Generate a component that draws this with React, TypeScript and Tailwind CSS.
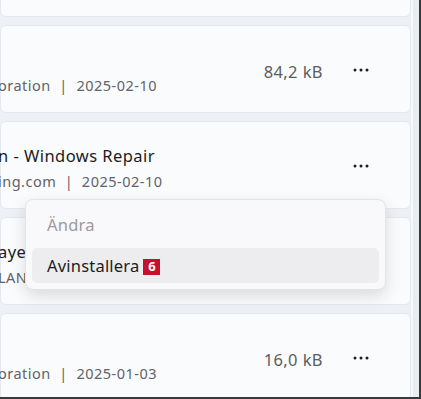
import React from "react";

interface RowProps {
  title?: string;
  subtitle: string;
  size?: string;
}

function Dots() {
  return (
    <svg width="16" height="4" viewBox="0 0 16 4" className="text-[#1f1f1f]">
      <circle cx="2" cy="2" r="1.5" fill="currentColor" />
      <circle cx="8" cy="2" r="1.5" fill="currentColor" />
      <circle cx="14" cy="2" r="1.5" fill="currentColor" />
    </svg>
  );
}

function AppRow({ title, subtitle, size }: RowProps) {
  return (
    <div className="h-[88px] shrink-0 flex items-center rounded-md bg-[#fafbfd] border border-[#e4e9ef] pr-[41px]">
      <div className="flex-1 flex flex-col gap-[5px] pt-[6px] -ml-[3px] overflow-hidden whitespace-pre">
        <span className="h-[20px] leading-[20px] text-[16.5px] tracking-[0.45px] text-[#1c1c1c]">{title ?? ""}</span>
        <span className="h-[20px] leading-[20px] text-[14.5px] tracking-[0.5px] text-[#606368]">{subtitle}</span>
      </div>
      <span className="pt-[6px] text-[16.5px] tracking-[0.4px] text-[#5a5d61] text-right">{size ?? ""}</span>
      <div className="ml-[30px] flex pt-[2px]">
        <Dots />
      </div>
    </div>
  );
}

export default function App() {
  return (
    <div
      className="w-[421px] h-[399px] overflow-hidden bg-[#edf1f6] border-r-2 border-b-2 border-[#3a3a3a] flex"
      style={{ fontFamily: '"Noto Sans", "Open Sans", sans-serif' }}
    >
      <div className="relative flex-1 overflow-hidden">
        <div className="flex flex-col gap-[8px] -mt-[71px]">
          <AppRow subtitle="" />
          <AppRow subtitle="oration  |  2025-02-10" size="84,2 kB" />
          <AppRow title="n - Windows Repair" subtitle="ing.com  |  2025-02-10" />
          <AppRow title="aye" subtitle="LAN" />
          <AppRow subtitle="oration  |  2025-01-03" size="16,0 kB" />
        </div>

        <div className="absolute left-[25px] top-[199px] w-[361px] h-[91px] rounded-lg bg-[#f9f9fb] border border-[#e2e4e8] shadow-[0_6px_16px_rgba(0,0,0,0.13)] px-[6px] pt-[7px] flex flex-col gap-[5px]">
          <div className="h-[36px] flex items-center pl-[15px] text-[16.5px] tracking-[0.2px] text-[#9b9b9d]">Ändra</div>
          <div className="h-[35px] flex items-center pl-[15px] pt-[2px] rounded-[5px] bg-[#ededf0] text-[16.5px] tracking-[0.2px] text-[#1c1c1c] gap-[4px]">
            <span>Avinstallera</span>
            <span className="w-[17px] h-[16px] bg-[#c8102e] text-white text-[13px] font-bold flex items-center justify-center leading-none tracking-normal">
              6
            </span>
          </div>
        </div>
      </div>
      <div className="w-[8px] bg-[#e8edf4] border-l-2 border-[#f6f8fb]" />
    </div>
  );
}
